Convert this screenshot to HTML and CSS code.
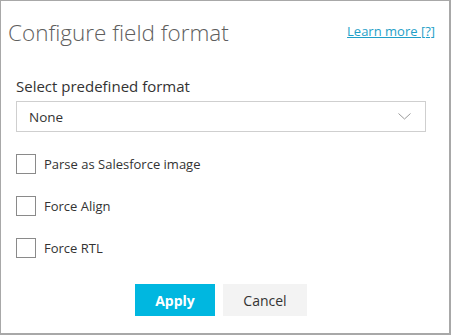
FILE: index.html
```html
<!DOCTYPE html>
<html lang="en">
<head>
    <meta charset="UTF-8">
    <meta name="viewport" content="width=device-width, initial-scale=1.0">
    <title>Configure field format</title>
    <link rel="stylesheet" href="styles.css">
</head>
<body>
    <div class="dialog">
        <div class="header">
            <h1 class="title">Configure field format</h1>
            <a class="learn-more" href="#">Learn more [?]</a>
        </div>

        <label class="field-label" for="format">Select predefined format</label>
        <div class="select">
            <span class="select-value">None</span>
            <svg class="chevron" width="13" height="7" viewBox="0 0 13 7">
                <polyline points="0.5,0.5 6.5,6 12.5,0.5" fill="none" stroke="#9a9a9a" stroke-width="1"/>
            </svg>
        </div>

        <div class="options">
            <label class="option"><span class="box"></span>Parse as Salesforce image</label>
            <label class="option"><span class="box"></span>Force Align</label>
            <label class="option"><span class="box"></span>Force RTL</label>
        </div>

        <div class="actions">
            <button class="btn apply-btn">Apply</button>
            <button class="btn cancel-btn">Cancel</button>
        </div>
    </div>
</body>
</html>
```

FILE: styles.css
```css
body {
    margin: 0;
    font-family: "Open Sans", "Noto Sans", sans-serif;
    color: #333;
    background-color: #fff;
}

.dialog {
    width: 451px;
    height: 335px;
    box-sizing: border-box;
    border: 1px solid #a8a8a8;
    border-right-width: 2px;
    border-bottom-width: 2px;
    padding: 0 23px 0 15px;
    display: flex;
    flex-direction: column;
}

.header {
    display: flex;
    justify-content: space-between;
    align-items: flex-start;
    margin-left: -8px;
    margin-right: -9px;
    padding-top: 17px;
}

.title {
    margin: 0;
    font-size: 22.5px;
    font-weight: 300;
    line-height: 30px;
    color: #5e5e5e;
}

.learn-more {
    margin-top: 4px;
    font-size: 13px;
    color: #1f9fc8;
    text-decoration: underline;
}

.field-label {
    margin-top: 28px;
    font-size: 15px;
    line-height: 20px;
    color: #333;
}

.select {
    margin-top: 5px;
    height: 31px;
    box-sizing: border-box;
    border: 1px solid #cfcfcf;
    display: flex;
    align-items: center;
    justify-content: space-between;
    padding: 0 14px 0 12px;
}

.select-value {
    font-size: 13.5px;
    color: #333;
}

.options {
    margin-top: 22px;
    display: flex;
    flex-direction: column;
    gap: 22px;
}

.option {
    display: flex;
    align-items: center;
    font-size: 13px;
    color: #333;
    height: 20px;
}

.box {
    width: 20px;
    height: 20px;
    box-sizing: border-box;
    border: 1px solid #8a8a8a;
    margin-right: 8px;
}

.actions {
    margin-top: 26px;
    display: flex;
    justify-content: center;
    gap: 8px;
}

.btn {
    height: 32px;
    border: none;
    font-family: "Open Sans", "Noto Sans", sans-serif;
    font-size: 14px;
    cursor: pointer;
}

.apply-btn {
    width: 80px;
    background-color: #00b7e0;
    color: #fff;
    font-weight: 700;
}

.cancel-btn {
    width: 84px;
    background-color: #f3f3f3;
    color: #333;
}
```
